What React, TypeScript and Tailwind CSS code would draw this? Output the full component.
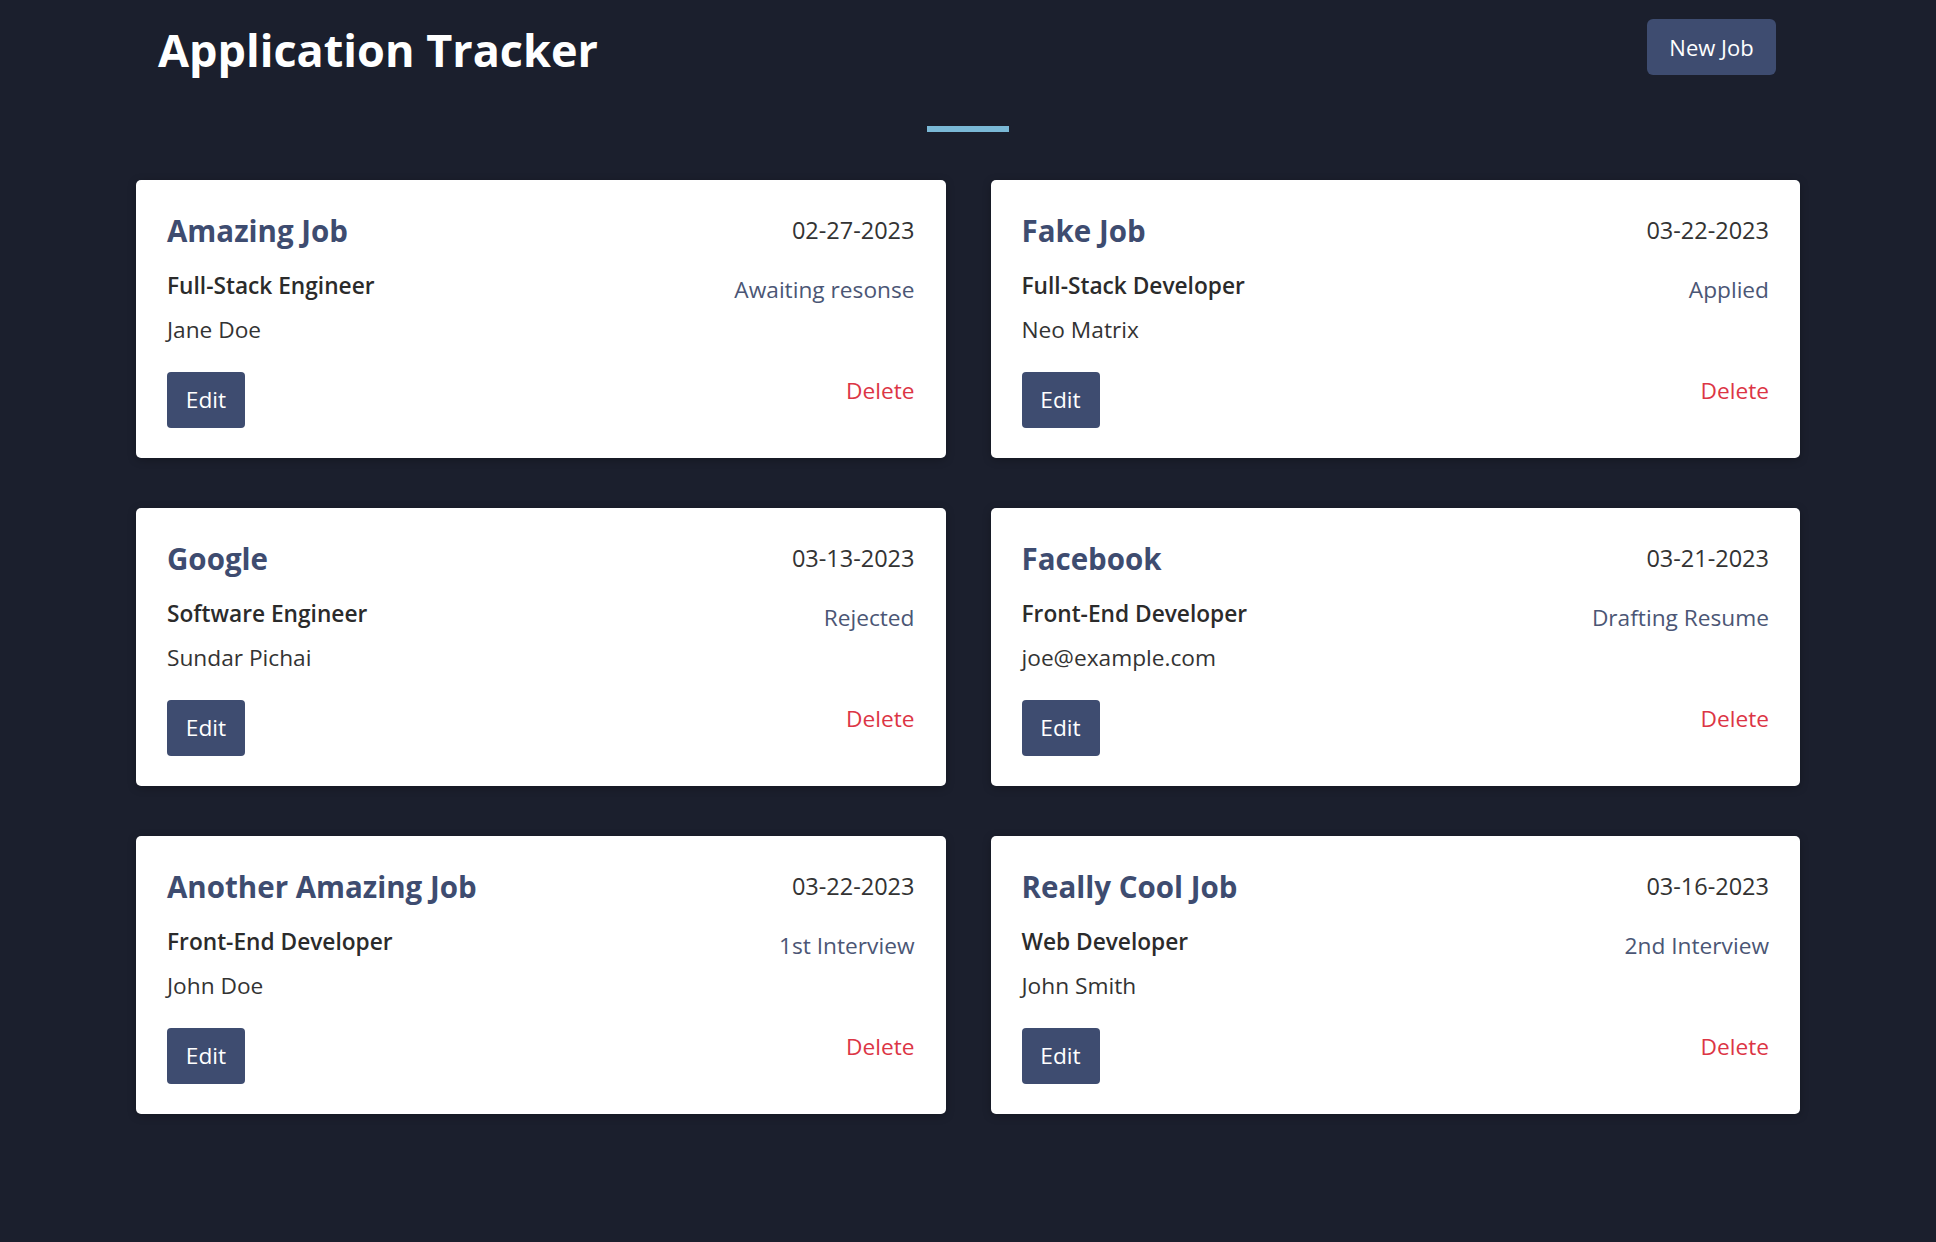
const jobs = [
  { id: 1, company: 'Amazing Job', date: '02-27-2023', role: 'Full-Stack Engineer', status: 'Awaiting resonse', contact: 'Jane Doe' },
  { id: 2, company: 'Fake Job', date: '03-22-2023', role: 'Full-Stack Developer', status: 'Applied', contact: 'Neo Matrix' },
  { id: 3, company: 'Google', date: '03-13-2023', role: 'Software Engineer', status: 'Rejected', contact: 'Sundar Pichai' },
  { id: 4, company: 'Facebook', date: '03-21-2023', role: 'Front-End Developer', status: 'Drafting Resume', contact: 'joe@example.com' },
  { id: 5, company: 'Another Amazing Job', date: '03-22-2023', role: 'Front-End Developer', status: '1st Interview', contact: 'John Doe' },
  { id: 6, company: 'Really Cool Job', date: '03-16-2023', role: 'Web Developer', status: '2nd Interview', contact: 'John Smith' },
];

const JobCard = ({ job }: { job: (typeof jobs)[number] }) => (
  <div className="h-[278px] rounded-[5px] bg-white px-[31px] pt-[32px] shadow-[0_2px_8px_rgba(0,0,0,0.25)]">
    <div className="flex items-start justify-between">
      <h2 className="text-[29.5px] font-bold leading-[38px] text-[#3e4c70]">{job.company}</h2>
      <span className="mt-[2px] text-[23.5px] leading-[32px] text-[#333]">{job.date}</span>
    </div>
    <div className="mt-[21px] flex items-start justify-between">
      <div>
        <p className="text-[22.7px] font-semibold leading-[30px] text-[#2b2b2b]">{job.role}</p>
        <p className="mt-[14px] text-[22.7px] leading-[30px] text-[#333]">{job.contact}</p>
      </div>
      <span className="mt-[4px] text-[22.7px] leading-[30px] text-[#4b5675]">{job.status}</span>
    </div>
    <div className="mt-[27px] flex items-start justify-between">
      <button className="h-[56px] w-[78px] rounded-[4px] bg-[#3e4c70] text-[22.7px] text-white">Edit</button>
      <button className="mt-[4px] text-[22.7px] leading-[30px] text-[#dc3545]">Delete</button>
    </div>
  </div>
);

export default function App() {
  return (
    <div className="min-h-[1242px] bg-[#1b1f2d] font-['Open_Sans',sans-serif]">
      <div className="mx-auto w-[1664px] pt-[19px]">
        <header className="flex h-[56px] items-center justify-between pl-[22px] pr-[24px]">
          <h1 className="pt-[6px] text-[45px] font-bold leading-[50px] text-white">Application Tracker</h1>
          <button className="h-[56px] w-[129px] rounded-[6px] bg-[#3e4c70] text-[22px] text-white">New Job</button>
        </header>
        <div className="mx-auto mt-[51px] h-[6px] w-[82px] bg-[#7ab8d6]" />
        <div className="mt-[48px] grid grid-cols-2 gap-x-[45px] gap-y-[50px]">
          {jobs.map((job) => (
            <JobCard key={job.id} job={job} />
          ))}
        </div>
      </div>
    </div>
  );
}
